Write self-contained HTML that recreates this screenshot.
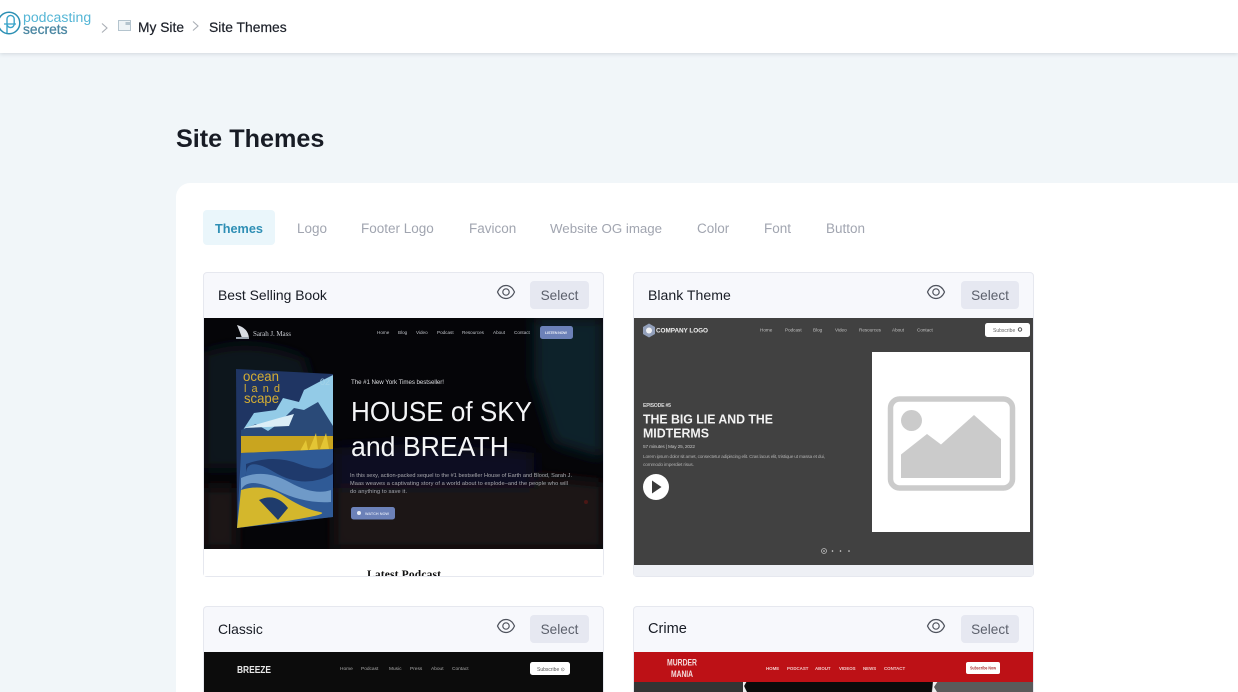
<!DOCTYPE html>
<html lang="en">
<head>
<meta charset="utf-8">
<title>Site Themes</title>
<style>
*{box-sizing:border-box}
html,body{margin:0;padding:0;width:1238px;height:692px;overflow:hidden}
#page{position:relative;width:1238px;height:692px;overflow:hidden;background:#f1f6f9;font-family:"Liberation Sans",sans-serif;color:#181c25}
.a{position:absolute;white-space:nowrap}
#hdr{left:0;top:0;width:1238px;height:53px;background:#fff;box-shadow:0 1px 4px rgba(60,80,100,.18)}
#panel{left:176px;top:183px;width:1062px;height:509px;background:#fff;border-radius:14px 0 0 0}
.tab{top:221px;font-size:13.5px;line-height:16px;color:#a1a5b0}
.card{width:401px;background:#f7f8fc;border:1px solid #e6e8ef;border-radius:4px;overflow:hidden}
.low{height:86px;border-bottom:0;border-radius:4px 4px 0 0}
.cardt{font-size:14px;line-height:18px;color:#181c25}
.sel{width:59px;height:28px;background:#e6e8f1;border-radius:4px;color:#5c606c;font-size:13.6px;line-height:29px;text-align:center}
.eye{width:20px;height:16px}
.th{filter:blur(.35px)}
svg{display:block}
</style>
</head>
<body>
<div id="page">

<div class="a" id="hdr"></div>

<!-- logo -->
<svg class="a" style="left:-3px;top:9px" width="26" height="28" viewBox="0 0 26 28" fill="none">
<circle cx="12" cy="14" r="10.800" stroke="#2b8fb3" stroke-width="1.500"/>
<path d="M10 24V10a3.600 3.600 0 0 1 7.200 0v5a3.600 3.600 0 0 1-7.200 0" stroke="#3aa3c9" stroke-width="1.400"/>
<path d="M7 15h12" stroke="#3aa3c9" stroke-width="1.300"/>
</svg>
<div class="a" style="left:23px;top:10px;font-size:14.100px;line-height:15px;color:#55b6d6">podcasting</div>
<div class="a" style="left:23px;top:22px;font-size:13.800px;line-height:15px;color:#4b87a2;-webkit-text-stroke:.3px #4b87a2">secrets</div>

<svg class="a" style="left:100px;top:22px" width="9" height="12" viewBox="0 0 9 12" fill="none"><path d="M2 1.500 7 6 2 10.500" stroke="#a9aeb5" stroke-width="1.100"/></svg>
<svg class="a" style="left:118px;top:20px" width="14" height="12" viewBox="0 0 14 12"><rect x=".5" y=".5" width="12" height="10" fill="#eef3f6" stroke="#b4c4ce"/><rect x="7.500" y="2" width="5" height="3" fill="#b4c4ce"/></svg>
<div class="a" style="left:138px;top:19px;font-size:13.800px;line-height:17px;color:#1c2029;-webkit-text-stroke:.2px #1c2029">My Site</div>
<svg class="a" style="left:191px;top:20px" width="9" height="12" viewBox="0 0 9 12" fill="none"><path d="M2 1.500 7 6 2 10.500" stroke="#a9aeb5" stroke-width="1.100"/></svg>
<div class="a" style="left:209px;top:19px;font-size:13.900px;line-height:17px;color:#1c2029;-webkit-text-stroke:.2px #1c2029">Site Themes</div>

<div class="a" style="left:176px;top:123px;font-size:25.200px;line-height:32px;font-weight:700;color:#181c25">Site Themes</div>

<div class="a" id="panel"></div>

<div class="a" style="left:203px;top:210px;width:72px;height:35px;background:#eaf6fb;border-radius:4px"></div>
<div class="a tab" style="left:215px;color:#2f8fb5;font-weight:700;font-size:12.700px">Themes</div>
<div class="a tab" style="left:297px">Logo</div>
<div class="a tab" style="left:361px">Footer Logo</div>
<div class="a tab" style="left:469px">Favicon</div>
<div class="a tab" style="left:550px;font-size:13.300px">Website OG image</div>
<div class="a tab" style="left:697px">Color</div>
<div class="a tab" style="left:764px">Font</div>
<div class="a tab" style="left:826px">Button</div>

<!-- cards -->
<div class="a card" style="left:203px;top:272px;height:305px"></div>
<div class="a card" style="left:633px;top:272px;height:305px"></div>
<div class="a card low" style="left:203px;top:606px"></div>
<div class="a card low" style="left:633px;top:606px"></div>

<div class="a cardt" style="left:218px;top:286px;font-size:13.900px">Best Selling Book</div>
<div class="a cardt" style="left:648px;top:286px;font-size:14.100px">Blank Theme</div>
<div class="a cardt" style="left:218px;top:620px;font-size:13.900px">Classic</div>
<div class="a cardt" style="left:648px;top:620px;font-size:14.600px">Crime</div>

<div class="a sel" style="left:530px;top:281px">Select</div>
<div class="a sel" style="left:961px;top:281px;width:58px">Select</div>
<div class="a sel" style="left:530px;top:615px">Select</div>
<div class="a sel" style="left:961px;top:615px;width:58px">Select</div>

<svg class="a eye" style="left:496px;top:284px" viewBox="0 0 20 16" fill="none" stroke="#4f535d" stroke-width="1.200"><path d="M1.500 8C3.500 3.500 6.500 1.500 10 1.500S16.500 3.500 18.500 8C16.500 12.500 13.500 14.500 10 14.500S3.500 12.500 1.500 8Z"/><circle cx="10" cy="8" r="3.200"/></svg>
<svg class="a eye" style="left:926px;top:284px" viewBox="0 0 20 16" fill="none" stroke="#4f535d" stroke-width="1.200"><path d="M1.500 8C3.500 3.500 6.500 1.500 10 1.500S16.500 3.500 18.500 8C16.500 12.500 13.500 14.500 10 14.500S3.500 12.500 1.500 8Z"/><circle cx="10" cy="8" r="3.200"/></svg>
<svg class="a eye" style="left:496px;top:618px" viewBox="0 0 20 16" fill="none" stroke="#4f535d" stroke-width="1.200"><path d="M1.500 8C3.500 3.500 6.500 1.500 10 1.500S16.500 3.500 18.500 8C16.500 12.500 13.500 14.500 10 14.500S3.500 12.500 1.500 8Z"/><circle cx="10" cy="8" r="3.200"/></svg>
<svg class="a eye" style="left:926px;top:618px" viewBox="0 0 20 16" fill="none" stroke="#4f535d" stroke-width="1.200"><path d="M1.500 8C3.500 3.500 6.500 1.500 10 1.500S16.500 3.500 18.500 8C16.500 12.500 13.500 14.500 10 14.500S3.500 12.500 1.500 8Z"/><circle cx="10" cy="8" r="3.200"/></svg>

<!-- Thumb 1 -->
<svg class="a th" style="left:204px;top:318px" width="399" height="258" viewBox="0 0 399 258" font-family="Liberation Sans, sans-serif">
<defs>
<filter id="b6" x="-30%" y="-30%" width="160%" height="160%"><feGaussianBlur stdDeviation="7"/></filter>
<clipPath id="c1"><rect width="399" height="231"/></clipPath>
</defs>
<rect width="399" height="258" fill="#fff"/>
<rect width="399" height="231" fill="#050508"/>
<g clip-path="url(#c1)">
<g filter="url(#b6)">
<path d="M330 0H399V140L350 125 330 60Z" fill="#0b2029"/>
<path d="M0 35Q45 18 100 40L118 100 110 150H0Z" fill="#10141c"/>
<path d="M0 170H32V231H0Z" fill="#1c1512"/>
<path d="M130 165 250 150 399 165V231H130Z" fill="#1a1718"/>
<path d="M130 130 230 125 330 135 330 170 130 170Z" fill="#0d1020"/>
</g>
<circle cx="382" cy="184" r="2" fill="#4a1715"/>
</g>
<!-- header -->
<path d="M33 7Q44 10 45 20L38 20Q36 14 33 7Z" fill="#d9dde3"/>
<rect x="32" y="19" width="13" height="2" fill="#9aa3ad"/>
<text x="49" y="18" fill="#c9ccd2" font-family="Liberation Serif, serif" font-size="7" textLength="38">Sarah J. Mass</text>
<g fill="#bfc2c8" font-size="4.600">
<text x="173" y="16">Home</text><text x="194" y="16">Blog</text><text x="212" y="16">Video</text><text x="233" y="16">Podcast</text><text x="258" y="16">Resources</text><text x="289" y="16">About</text><text x="310" y="16">Contact</text>
</g>
<rect x="336" y="8" width="33" height="13" rx="2.500" fill="#6c81b8"/>
<text x="341" y="16" fill="#e5e9f4" font-size="3.800" font-weight="700" textLength="22">LISTEN NOW</text>
<!-- book -->
<path d="M32 51 129 56V199L33 210Z" fill="#1f3563"/>
<path d="M37 115 50 95 72 92 79 80 95 84 100 72 115 64 129 57V111L60 118Z" fill="#93cbe7"/>
<path d="M37 112 52 106 64 113 74 106 90 90 100 92 114 84 129 108V118H37Z" fill="#2a4a78"/>
<path d="M40 110 75 100 90 96 85 108Z" fill="#dbeef7"/>
<path d="M37 118H129V132L37 135Z" fill="#c9a51f"/>
<path d="M96 133 102 122 104 132ZM105 132 112 115 114 131ZM116 131 122 115 125 131Z" fill="#e3c534"/>
<path d="M37 135 129 131V199L33 210Z" fill="#2f5a96"/>
<path d="M42 146Q70 136 95 146T129 144V156Q100 172 70 154T42 160Z" fill="#1f3a6c"/>
<path d="M37 160Q60 150 85 164T127 172V184Q100 186 72 172T37 172Z" fill="#6f9ac8"/>
<path d="M37 172Q60 165 80 178T116 194 33 210Z" fill="#d4b72c"/>
<path d="M55 182Q72 174 84 190L74 202Z" fill="#1f3c6c"/>
<g fill="#d5ad32"><text x="39" y="63" font-size="14" textLength="36" lengthAdjust="spacingAndGlyphs">ocean</text><text x="40" y="74" font-size="11" textLength="36">land</text><text x="40" y="85" font-size="14" textLength="35" lengthAdjust="spacingAndGlyphs">scape</text></g>
<text x="116" y="67" fill="#a5d3e9" font-size="9">02</text>
<!-- copy -->
<text x="147" y="66" fill="#dcdde0" font-size="6.200" textLength="93">The #1 New York Times bestseller!</text>
<text x="147" y="103" fill="#f4f5f7" font-size="27.500" textLength="181" lengthAdjust="spacingAndGlyphs">HOUSE of SKY</text>
<text x="147" y="138" fill="#f4f5f7" font-size="27.500" textLength="158" lengthAdjust="spacingAndGlyphs">and BREATH</text>
<g fill="#a9a9ae" font-size="5.600">
<text x="146" y="159" textLength="222">In this sexy, action-packed sequel to the #1 bestseller House of Earth and Blood, Sarah J.</text>
<text x="146" y="167" textLength="218">Maas weaves a captivating story of a world about to explode–and the people who will</text>
<text x="146" y="175" textLength="57">do anything to save it.</text>
</g>
<rect x="147" y="189" width="44" height="12.500" rx="2.500" fill="#6c81b8"/>
<rect x="153" y="193" width="4" height="4" rx="2" fill="#e5e9f4"/>
<text x="161" y="197" fill="#d5dcee" font-size="3.800" font-weight="700" textLength="24">WATCH NOW</text>
<text x="163" y="260" fill="#111" font-family="Liberation Serif, serif" font-size="11.500" font-weight="700" textLength="74">Latest Podcast</text>
</svg>

<!-- Thumb 2 -->
<svg class="a th" style="left:634px;top:318px" width="399" height="247" viewBox="0 0 399 247" font-family="Liberation Sans, sans-serif">
<rect width="399" height="247" fill="#414141"/>
<path d="M15 5.500 21 9V16L15 19.500 9 16V9Z" fill="#93a0bb"/>
<circle cx="15" cy="12.500" r="3" fill="#f1f2f5"/>
<text x="22" y="14.500" fill="#f0f0f0" font-size="6.400" font-weight="700" textLength="52">COMPANY LOGO</text>
<g fill="#c2c2c2" font-size="4.600">
<text x="126" y="13.500">Home</text><text x="151" y="13.500">Podcast</text><text x="179" y="13.500">Blog</text><text x="201" y="13.500">Video</text><text x="225" y="13.500">Resources</text><text x="258" y="13.500">About</text><text x="283" y="13.500">Contact</text>
</g>
<rect x="351" y="5" width="45" height="14" rx="2.500" fill="#fff"/>
<text x="359" y="14" fill="#666" font-size="5">Subscribe</text>
<circle cx="386" cy="11.500" r="1.700" fill="none" stroke="#555" stroke-width="1"/>
<rect x="238" y="34" width="158" height="180" fill="#fff"/>
<rect x="256.500" y="81" width="122" height="89" rx="9" fill="none" stroke="#cbcbcb" stroke-width="5.500"/>
<circle cx="277.500" cy="102.500" r="10.500" fill="#cbcbcb"/>
<path d="M267 136.500 293 116 307 126.500 340 97 367 121V160H267Z" fill="#cbcbcb"/>
<text x="9" y="89" fill="#d9d9d9" font-size="5.200" font-weight="700" textLength="28">EPISODE #5</text>
<text x="9" y="105.500" fill="#f3f3f3" font-size="12.500" font-weight="700" textLength="130" lengthAdjust="spacingAndGlyphs">THE BIG LIE AND THE</text>
<text x="9" y="119.500" fill="#f3f3f3" font-size="12.500" font-weight="700" textLength="66" lengthAdjust="spacingAndGlyphs">MIDTERMS</text>
<text x="9" y="130" fill="#c2c2c2" font-size="4.800" textLength="52">57 minutes | May 25, 2022</text>
<text x="9" y="140" fill="#adadad" font-size="4.800" textLength="182">Lorem ipsum dolor sit amet, consectetur adipiscing elit. Cras lacus elit, tristique ut massa et dui,</text>
<text x="9" y="148" fill="#adadad" font-size="4.800" textLength="51">commodo imperdiet risus.</text>
<circle cx="22" cy="169" r="13" fill="#fff"/>
<path d="M18 162.500 27.500 169 18 175.500Z" fill="#3a3a3a"/>
<circle cx="190" cy="233" r="2.500" fill="none" stroke="#bdbdbd" stroke-width=".8"/>
<circle cx="190" cy="233" r=".8" fill="#ddd"/>
<circle cx="198.500" cy="233" r=".8" fill="#ddd"/>
<circle cx="206.500" cy="233" r=".8" fill="#ddd"/>
<circle cx="215" cy="233" r=".8" fill="#ddd"/>
</svg>
<div class="a" style="left:634px;top:565px;width:399px;height:11px;background:#eef0f5"></div>

<!-- Thumb 3 -->
<svg class="a th" style="left:204px;top:652px" width="399" height="40" viewBox="0 0 399 40" font-family="Liberation Sans, sans-serif">
<rect width="399" height="40" fill="#0c0c0c"/>
<text x="33" y="21" fill="#e8e8e8" font-size="10" font-weight="700" textLength="34" lengthAdjust="spacingAndGlyphs">BREEZE</text>
<g fill="#a9a9a9" font-size="4.800">
<text x="136" y="18">Home</text><text x="157" y="18">Podcast</text><text x="185" y="18">Music</text><text x="206" y="18">Press</text><text x="227" y="18">About</text><text x="248" y="18">Contact</text>
</g>
<rect x="326" y="10" width="40" height="13" rx="2.500" fill="#fff"/>
<text x="333" y="19" fill="#555" font-size="5">Subscribe ⊙</text>
</svg>

<!-- Thumb 4 -->
<svg class="a th" style="left:634px;top:652px" width="399" height="40" viewBox="0 0 399 40" font-family="Liberation Sans, sans-serif">
<rect width="399" height="40" fill="#2a2a2a"/>
<path d="M112 29H300L297 40H110Z" fill="#0b0b0b"/>
<path d="M300 29H399V40H300Z" fill="#5a5a5a"/>
<path d="M0 29H110V40H0Z" fill="#343434"/>
<path d="M109 29H113L110 34 113 40H109Z" fill="#eee"/>
<path d="M299 29H304L300 35 303 40H298Z" fill="#eee"/>
<rect width="399" height="30" fill="#bd1116"/>
<text x="33" y="13.500" fill="#f3dcdc" font-size="9.500" font-weight="700" textLength="30" lengthAdjust="spacingAndGlyphs">MURDER</text>
<text x="37" y="25" fill="#f3dcdc" font-size="9.500" font-weight="700" textLength="22" lengthAdjust="spacingAndGlyphs">MANIA</text>
<g fill="#f3c9c9" font-size="4.400" font-weight="700">
<text x="132" y="18">HOME</text><text x="153" y="18">PODCAST</text><text x="181" y="18">ABOUT</text><text x="205" y="18">VIDEOS</text><text x="229" y="18">NEWS</text><text x="250" y="18">CONTACT</text>
</g>
<rect x="332" y="10" width="34" height="12" rx="2" fill="#fff"/>
<text x="336" y="17.500" fill="#a33" font-size="4.200" font-weight="700" textLength="26" lengthAdjust="spacingAndGlyphs">Subscribe Now</text>
</svg>

</div>
</body>
</html>
